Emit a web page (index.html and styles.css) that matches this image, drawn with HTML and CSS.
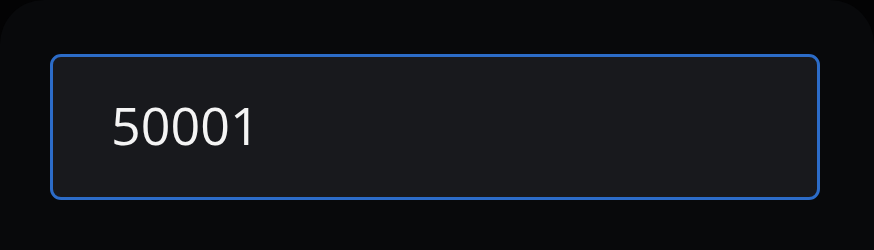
FILE: index.html
```html
<!DOCTYPE html>
<html lang="en">
<head>
    <meta charset="UTF-8">
    <meta name="viewport" content="width=device-width, initial-scale=1.0">
    <title>Code input</title>
    <link rel="stylesheet" href="styles.css">
</head>
<body>

    <div class="panel">
        <div class="field">
            <input type="text" class="code-input" value="50001">
        </div>
    </div>

</body>
</html>
```

FILE: styles.css
```css
html, body {
    margin: 0;
    padding: 0;
    background: #030304;
    overflow: hidden;
}

.panel {
    background: #08090b;
    border-radius: 44px 44px 0 0;
    height: 250px;
    padding: 54px 0 0 50px;
    box-sizing: border-box;
}

.field {
    width: 770px;
    height: 146px;
    box-sizing: border-box;
    border: 3px solid #2c6cc8;
    border-radius: 11px;
    background: #18191d;
    display: flex;
    align-items: center;
    padding-left: 58px;
}

.code-input {
    background: transparent;
    border: none;
    outline: none;
    color: #f4f4f4;
    font-family: "Open Sans", "Noto Sans", sans-serif;
    font-size: 52px;
    width: 100%;
    padding: 0;
    margin-top: -5px;
}
```
